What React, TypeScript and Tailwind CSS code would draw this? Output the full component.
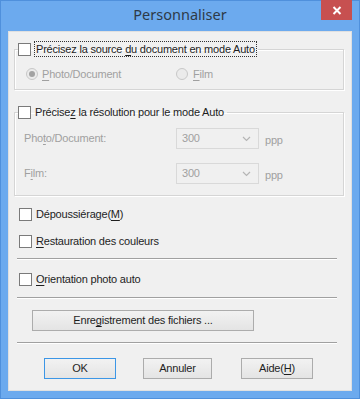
import React from 'react';

// Windows 8 style "Personnaliser" dialog

function U({ children }: { children: React.ReactNode }) {
  return <span className="underline underline-offset-2">{children}</span>;
}

function Checkbox() {
  return <span className="inline-block w-[13px] h-[13px] shrink-0 bg-white border border-[#7a7a7a]" />;
}

function Radio({ checked }: { checked?: boolean }) {
  return (
    <span className="flex items-center justify-center w-[12px] h-[12px] shrink-0 rounded-full border border-[#c8c8c8] bg-[#ebebeb]">
      {checked && <span className="w-[6px] h-[6px] rounded-full bg-[#a2a2a2]" />}
    </span>
  );
}

function Combo() {
  return (
    <div className="flex items-center justify-between w-[83px] h-[21px] border border-[#d9d9d9] bg-[#f0f0f0] pl-[5px] pr-[7px] text-[#a0a0a0]">
      <span>300</span>
      <svg width="9" height="6" viewBox="0 0 9 6">
        <path d="M1 1 L4.5 4.5 L8 1" fill="none" stroke="#b5b5b5" strokeWidth="1.2" />
      </svg>
    </div>
  );
}

function Separator() {
  return <div className="ml-[3px] w-[320px] h-[2px] border-t border-[#a0a0a0] border-b border-b-white" />;
}

function Button({ children, width, primary }: { children: React.ReactNode; width: number; primary?: boolean }) {
  return (
    <div
      className={`flex items-center justify-center h-[21px] bg-gradient-to-b from-[#f2f2f2] to-[#e4e4e4] border ${
        primary ? 'border-[#3c96e6]' : 'border-[#acacac]'
      } text-[#1e1e1e]`}
      style={{ width }}
    >
      {children}
    </div>
  );
}

export default function App() {
  return (
    <div className="w-[360px] h-[399px] bg-[#6caaee] border border-[#4f90dc] flex flex-col font-['Liberation_Sans',sans-serif] text-[11px] tracking-[-0.2px] text-[#1e1e1e]">
      {/* Title bar */}
      <div className="relative h-[30px] flex items-center justify-center">
        <span className="font-['Noto_Sans',sans-serif] text-[14.5px] tracking-normal text-[#2e3a48] -mt-[2px]">Personnaliser</span>
        <div className="absolute right-[7px] top-[-1px] w-[31px] h-[20px] bg-[#c75050] flex items-center justify-center">
          <svg width="10" height="9" viewBox="0 0 10 9">
            <path d="M1.5 1 L8.5 8 M8.5 1 L1.5 8" stroke="white" strokeWidth="2" />
          </svg>
        </div>
      </div>

      {/* Client area */}
      <div className="mx-[7px] h-[360px] bg-[#f0f0f0] border border-[#e0e0e0] pl-[5px] pt-[9px] flex flex-col">
        {/* Group 1 */}
        <fieldset className="w-[330px] border border-[#d5d5d5] shadow-[1px_1px_0_#fff,inset_1px_1px_0_#fff] pb-[7px]">
          <legend className="ml-[3px] pr-px">
            <div className="flex items-center h-[16px] gap-[3px]">
              <Checkbox />
              <span className="border border-dotted border-[#333] px-px leading-[14px]">
                Précisez la source <U>d</U>u document en mode Auto
              </span>
            </div>
          </legend>
          <div className="flex items-center h-[16px] mt-[9px] pl-[11px] text-[#a0a0a0]">
            <div className="flex items-center gap-[4px] w-[150px]">
              <Radio checked />
              <span><U>P</U>hoto/Document</span>
            </div>
            <div className="flex items-center gap-[5px]">
              <Radio />
              <span><U>F</U>ilm</span>
            </div>
          </div>
        </fieldset>

        {/* Group 2 */}
        <fieldset className="mt-[14px] w-[330px] border border-[#d5d5d5] shadow-[1px_1px_0_#fff,inset_1px_1px_0_#fff] pb-[11px]">
          <legend className="ml-[3px] pr-[3px]">
            <div className="flex items-center h-[16px] gap-[4px]">
              <Checkbox />
              <span>Précise<U>z</U> la résolution pour le mode Auto</span>
            </div>
          </legend>
          <div className="flex items-center mt-[8px] pl-[9px] text-[#a0a0a0]">
            <span className="w-[152px]">Pho<U>t</U>o/Document:</span>
            <Combo />
            <span className="ml-[6px] mt-[4px]">ppp</span>
          </div>
          <div className="flex items-center mt-[14px] pl-[9px] text-[#a0a0a0]">
            <span className="w-[152px]">F<U>i</U>lm:</span>
            <Combo />
            <span className="ml-[6px] mt-[4px]">ppp</span>
          </div>
        </fieldset>

        <div className="flex items-center h-[16px] gap-[4px] ml-[5px] mt-[10px]">
          <Checkbox />
          <span>Dépoussiérage(<U>M</U>)</span>
        </div>
        <div className="flex items-center h-[16px] gap-[4px] ml-[5px] mt-[11px]">
          <Checkbox />
          <span><U>R</U>estauration des couleurs</span>
        </div>
        <div className="mt-[9px]">
          <Separator />
        </div>
        <div className="flex items-center h-[16px] gap-[4px] ml-[5px] mt-[11px]">
          <Checkbox />
          <span><U>O</U>rientation photo auto</span>
        </div>
        <div className="mt-[10px]">
          <Separator />
        </div>
        <div className="ml-[18px] mt-[11px]">
          <Button width={222}>
            <span>Enre<U>g</U>istrement des fichiers ...</span>
          </Button>
        </div>
        <div className="mt-[11px]">
          <Separator />
        </div>
        <div className="flex mt-[14px] pl-[30px]">
          <Button width={72} primary>OK</Button>
          <div className="ml-[27px]">
            <Button width={69}>Annuler</Button>
          </div>
          <div className="ml-[29px]">
            <Button width={72}>
              <span>Aide(<U>H</U>)</span>
            </Button>
          </div>
        </div>
      </div>
    </div>
  );
}
